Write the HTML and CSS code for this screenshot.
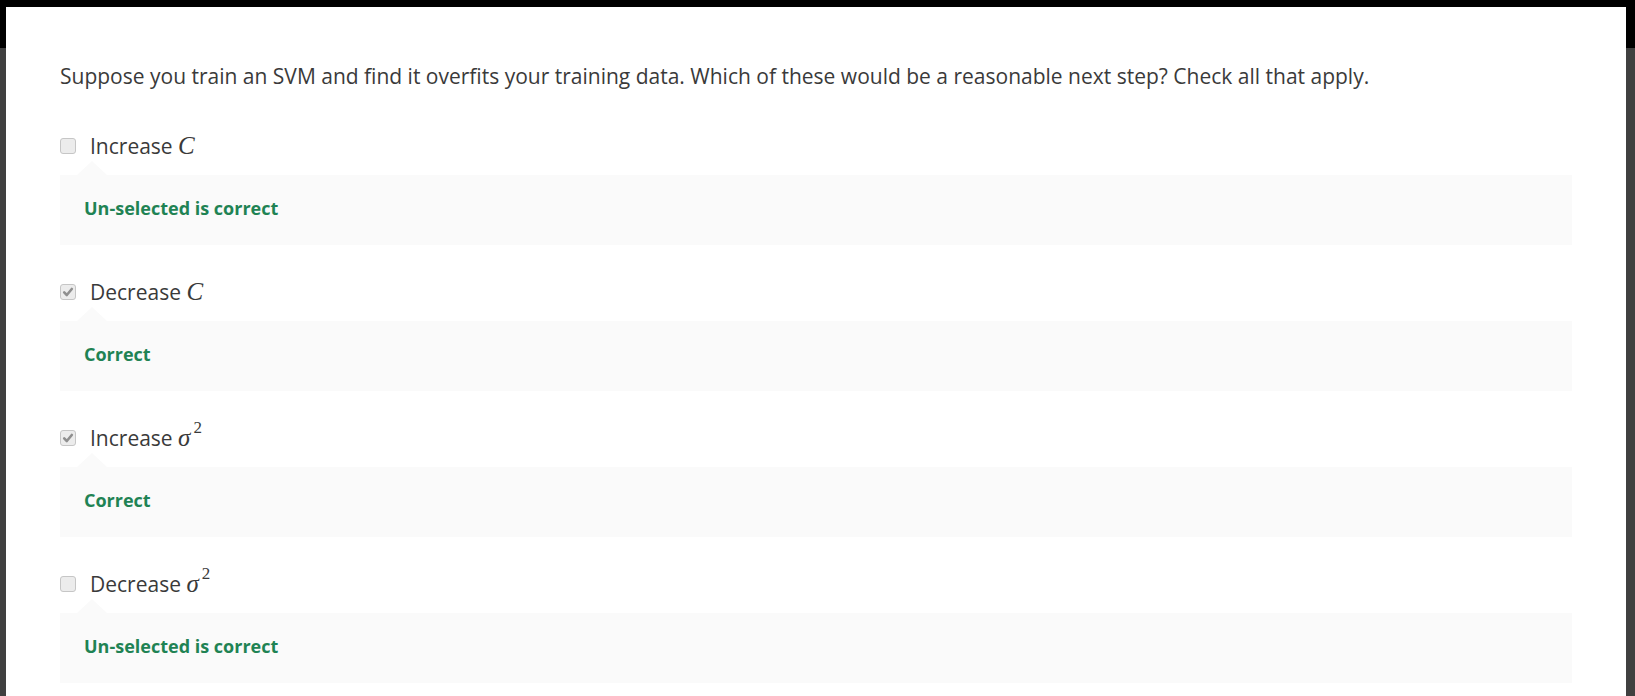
FILE: index.html
```html
<!DOCTYPE html>
<html lang="en">
<head>
<meta charset="utf-8">
<title>Quiz</title>
<link rel="stylesheet" href="styles.css">
</head>
<body>
<div class="modal">
  <p class="question">Suppose you train an SVM and find it overfits your training data. Which of these would be a reasonable next step? Check all that apply.</p>

  <div class="option">
    <div class="row"><span class="cb"></span><span class="label">Increase <span class="math">C</span></span></div>
    <div class="feedback">Un-selected is correct</div>
  </div>

  <div class="option">
    <div class="row"><span class="cb checked"><svg viewBox="0 0 12 12" width="12" height="12"><path d="M2.2 6.4 L4.8 9 L9.8 3" fill="none" stroke="#8f8f8f" stroke-width="2.6" stroke-linecap="round" stroke-linejoin="round"/></svg></span><span class="label">Decrease <span class="math">C</span></span></div>
    <div class="feedback">Correct</div>
  </div>

  <div class="option">
    <div class="row"><span class="cb checked"><svg viewBox="0 0 12 12" width="12" height="12"><path d="M2.2 6.4 L4.8 9 L9.8 3" fill="none" stroke="#8f8f8f" stroke-width="2.6" stroke-linecap="round" stroke-linejoin="round"/></svg></span><span class="label">Increase <span class="math">σ<sup>2</sup></span></span></div>
    <div class="feedback">Correct</div>
  </div>

  <div class="option">
    <div class="row"><span class="cb"></span><span class="label">Decrease <span class="math">σ<sup>2</sup></span></span></div>
    <div class="feedback">Un-selected is correct</div>
  </div>
</div>
</body>
</html>
```

FILE: styles.css
```css
html, body {
  margin: 0;
  padding: 0;
}
body {
  background: linear-gradient(#000 0, #000 48px, #404040 48px);
  height: 696px;
  overflow: hidden;
  font-family: "Open Sans", "Noto Sans", sans-serif;
  color: #3a3a3a;
}
.modal {
  margin: 7px 9px 0 6px;
  background: #fff;
  padding: 55px 54px 40px 54px;
  height: 800px;
}
.question {
  margin: 0 0 42px 0;
  font-size: 21px;
  line-height: 28px;
}
.option {
  margin-bottom: 33px;
}
.row {
  display: flex;
  align-items: center;
  height: 28px;
}
.cb {
  box-sizing: border-box;
  width: 16px;
  height: 16px;
  border: 1px solid #c6c6c6;
  border-radius: 3px;
  background: #ececec;
  margin-right: 14px;
  display: flex;
  align-items: center;
  justify-content: center;
}
.label {
  font-size: 21px;
  line-height: 28px;
}
.math {
  font-family: "Liberation Serif", "DejaVu Serif", serif;
  font-style: italic;
  font-size: 25px;
}
.math sup {
  font-style: normal;
  font-size: 17px;
  line-height: 0;
  vertical-align: 13px;
  margin-left: 3px;
}
.feedback {
  position: relative;
  margin-top: 15px;
  background: #fafafa;
  padding: 21px 24px 25px 24px;
  font-size: 18px;
  line-height: 24px;
  font-weight: 700;
  color: #1f8354;
}
.feedback::before {
  content: "";
  position: absolute;
  left: 17px;
  top: -14px;
  border-left: 15px solid transparent;
  border-right: 15px solid transparent;
  border-bottom: 14px solid #fafafa;
}
```
